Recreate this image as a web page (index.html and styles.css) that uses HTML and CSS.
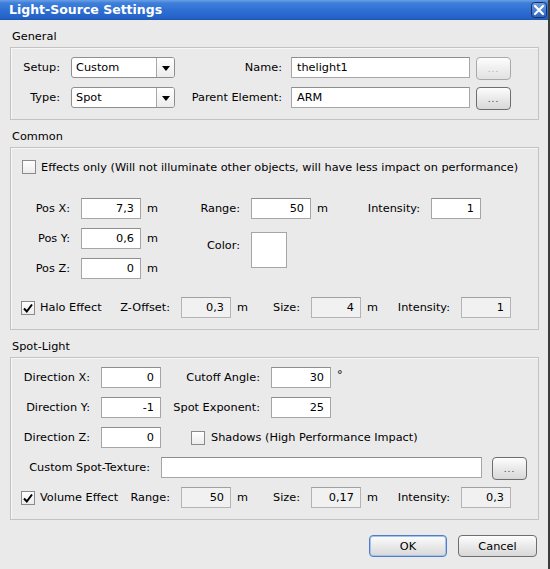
FILE: index.html
```html
<!DOCTYPE html>
<html lang="en">
<head>
    <meta charset="UTF-8">
    <title>Light-Source Settings</title>
    <link rel="stylesheet" href="styles.css">
</head>
<body>

    <div class="window">
        <div class="titlebar">
            <span class="title">Light-Source Settings</span>
            <span class="close">
                <svg width="16" height="16" viewBox="0 0 16 16">
                    <defs>
                        <linearGradient id="cg" x1="0" y1="0" x2="0" y2="1">
                            <stop offset="0" stop-color="#6d9fe4"/>
                            <stop offset="1" stop-color="#2b62c2"/>
                        </linearGradient>
                    </defs>
                    <rect x="0.5" y="0.5" width="15" height="15" rx="3" fill="url(#cg)" stroke="#1d2f5c"/>
                    <path d="M4 4 L12 12 M12 4 L4 12" stroke="#fff" stroke-width="2.2" stroke-linecap="round"/>
                </svg>
            </span>
        </div>

        <div class="content">
            <!-- General -->
            <div class="group-title">General</div>
            <div class="group general">
                <div class="general-grid">
                    <span class="lbl">Setup:</span>
                    <div class="combo"><span class="combo-text">Custom</span><span class="combo-btn"><i></i></span></div>
                    <span class="lbl lbl-name">Name:</span>
                    <div class="field">thelight1</div>
                    <button class="dots" disabled>...</button>

                    <span class="lbl">Type:</span>
                    <div class="combo"><span class="combo-text">Spot</span><span class="combo-btn"><i></i></span></div>
                    <span class="lbl lbl-name">Parent Element:</span>
                    <div class="field">ARM</div>
                    <button class="dots">...</button>
                </div>
            </div>

            <!-- Common -->
            <div class="group-title">Common</div>
            <div class="group common">
                <div class="check-row">
                    <span class="check"></span>
                    <span>Effects only (Will not illuminate other objects, will have less impact on performance)</span>
                </div>

                <div class="common-grid">
                    <span class="lbl c1">Pos X:</span>
                    <div class="field num">7,3</div>
                    <span class="unit">m</span>
                    <span class="lbl">Range:</span>
                    <div class="field num">50</div>
                    <span class="unit">m</span>
                    <span class="lbl">Intensity:</span>
                    <div class="field num">1</div>

                    <span class="lbl c1">Pos Y:</span>
                    <div class="field num">0,6</div>
                    <span class="unit">m</span>
                    <span class="lbl color-lbl">Color:</span>
                    <div class="color-box"></div>

                    <span class="lbl c1">Pos Z:</span>
                    <div class="field num">0</div>
                    <span class="unit">m</span>
                </div>

                <div class="effect-row">
                    <div class="check-row">
                        <span class="check checked">
                            <svg width="12" height="12" viewBox="0 0 12 12"><path d="M2 6.5 L4.8 9.5 L10 2.5" fill="none" stroke="#000" stroke-width="2"/></svg>
                        </span>
                        <span>Halo Effect</span>
                    </div>
                    <span class="lbl">Z-Offset:</span>
                    <div class="field num off">0,3</div>
                    <span class="unit">m</span>
                    <span class="lbl">Size:</span>
                    <div class="field num off">4</div>
                    <span class="unit">m</span>
                    <span class="lbl">Intensity:</span>
                    <div class="field num off">1</div>
                </div>
            </div>

            <!-- Spot-Light -->
            <div class="group-title">Spot-Light</div>
            <div class="group spot">
                <div class="spot-grid">
                    <span class="lbl">Direction X:</span>
                    <div class="field num">0</div>
                    <span class="lbl">Cutoff Angle:</span>
                    <div class="field num">30</div>
                    <span class="unit deg">°</span>

                    <span class="lbl">Direction Y:</span>
                    <div class="field num">-1</div>
                    <span class="lbl">Spot Exponent:</span>
                    <div class="field num">25</div>
                    <span></span>

                    <span class="lbl">Direction Z:</span>
                    <div class="field num">0</div>
                    <div class="check-row shadows">
                        <span class="check"></span>
                        <span>Shadows (High Performance Impact)</span>
                    </div>
                </div>

                <div class="texture-row">
                    <span class="lbl tex-lbl">Custom Spot-Texture:</span>
                    <div class="field tex-field"></div>
                    <button class="dots">...</button>
                </div>

                <div class="effect-row">
                    <div class="check-row">
                        <span class="check checked">
                            <svg width="12" height="12" viewBox="0 0 12 12"><path d="M2 6.5 L4.8 9.5 L10 2.5" fill="none" stroke="#000" stroke-width="2"/></svg>
                        </span>
                        <span>Volume Effect</span>
                    </div>
                    <span class="lbl">Range:</span>
                    <div class="field num off">50</div>
                    <span class="unit">m</span>
                    <span class="lbl">Size:</span>
                    <div class="field num off">0,17</div>
                    <span class="unit">m</span>
                    <span class="lbl">Intensity:</span>
                    <div class="field num off">0,3</div>
                </div>
            </div>

            <div class="buttons">
                <button class="btn default">OK</button>
                <button class="btn">Cancel</button>
            </div>
        </div>
    </div>

</body>
</html>
```

FILE: styles.css
```css
body {
    margin: 0;
    padding: 0;
    font-family: "DejaVu Sans", "Liberation Sans", sans-serif;
    font-size: 11.3px;
    color: #000;
    background-color: #eaeaea;
}
.window {
    width: 548px;
    height: 569px;
    background-color: #eaeaea;
    border-right: 2px solid #3c3c3c;
}
.titlebar {
    height: 20px;
    display: flex;
    align-items: center;
    justify-content: space-between;
    padding: 0 1px 0 9px;
    background: linear-gradient(#6a9fe6 0, #3f7fda 3px, #2f6fd3 10px, #2462c6 18px, #1b55b0 20px);
}
.title {
    color: #fff;
    font-weight: bold;
    font-size: 12.5px;
    line-height: 20px;
}
.close {
    display: flex;
    width: 16px;
    height: 16px;
}
.content {
    padding: 0 0 0 10px;
}
.group-title {
    line-height: 13px;
    margin: 10px 0 4px 2px;
}
.group {
    width: 527px;
    border: 1px solid #c3c3c3;
    box-shadow: inset 1px 1px 0 #f7f7f7;
}
.lbl {
    display: flex;
    align-items: center;
    justify-content: flex-end;
    padding-right: 11px;
    white-space: nowrap;
}
.unit {
    display: flex;
    align-items: center;
    padding-left: 6px;
}
.deg {
    align-items: flex-start;
    padding-top: 1px;
}
.field {
    box-sizing: border-box;
    height: 21px;
    line-height: 19px;
    padding: 0 5px;
    background-color: #fff;
    border: 1px solid #a6a6a6;
    border-top-color: #8e8e8e;
    white-space: nowrap;
}
.field.num {
    text-align: right;
    padding-right: 6px;
}
.field.off {
    background-color: #f1f1f1;
    border-color: #b4b4b4;
    border-top-color: #a0a0a0;
}

/* combo box */
.combo {
    box-sizing: border-box;
    height: 21px;
    display: flex;
    background-color: #fff;
    border: 1px solid #8f8f8f;
    border-radius: 3px;
}
.combo-text {
    flex: 1;
    line-height: 19px;
    padding-left: 4px;
}
.combo-btn {
    width: 17px;
    display: flex;
    align-items: center;
    justify-content: center;
    border-left: 1px solid #a8a8a8;
    background: linear-gradient(#ffffff, #ececec);
    border-radius: 0 2px 2px 0;
}
.combo-btn i {
    width: 0;
    height: 0;
    border-left: 4px solid transparent;
    border-right: 4px solid transparent;
    border-top: 5px solid #000;
    margin-top: 1px;
}

/* buttons */
.dots, .btn {
    box-sizing: border-box;
    font-family: inherit;
    font-size: 11.3px;
    color: #000;
    background: linear-gradient(#fdfdfd, #e6e6e6 60%, #d8d8d8);
    border: 1px solid #6e6e6e;
    border-radius: 4px;
    padding: 0;
}
.dots {
    width: 35px;
    height: 23px;
    margin-left: 6px;
    font-size: 9px;
    letter-spacing: 1px;
    color: #333;
}
.dots:disabled {
    color: #aaa;
    border-color: #a9a9a9;
    background: linear-gradient(#fdfdfd, #ececec 60%, #e2e2e2);
}

/* checkboxes */
.check-row {
    display: flex;
    align-items: center;
    height: 14px;
    white-space: nowrap;
}
.check {
    box-sizing: border-box;
    flex: none;
    width: 14px;
    height: 14px;
    margin-right: 5px;
    border: 1px solid #8a8a8a;
    background: linear-gradient(#ffffff, #ececec);
    display: flex;
    align-items: center;
    justify-content: center;
}

/* general */
.general-grid {
    display: grid;
    grid-template-columns: 60px 104px 116px 179px 41px;
    grid-template-rows: 21px 21px;
    row-gap: 9px;
    padding: 9px 0 11px;
}
.lbl-name {
    padding-right: 9px;
}

/* common */
.common {
    padding: 12px 0 11px;
}
.common > .check-row {
    padding-left: 11px;
}
.common-grid {
    display: grid;
    grid-template-columns: 70px 60px 19px 91px 60px 19px 101px 50px;
    grid-template-rows: 21px 21px 21px;
    row-gap: 9px;
    margin-top: 24px;
}
.c1 {
    grid-column: 1;
}
.color-lbl {
    grid-column: 4;
    grid-row: 2 / 4;
    align-items: flex-start;
    padding-top: 11px;
}
.color-box {
    grid-column: 5;
    grid-row: 2 / 4;
    width: 36px;
    height: 36px;
    margin-top: 4px;
    box-sizing: border-box;
    background-color: #fff;
    border: 1px solid #a6a6a6;
}
.effect-row {
    display: grid;
    grid-template-columns: 109px 61px 50px 30px 50px 50px 30px 70px 50px;
    height: 21px;
}
.common .effect-row {
    margin-top: 18px;
}
.effect-row .check-row {
    height: 21px;
    padding-left: 10px;
}

/* spot-light */
.spot {
    display: flex;
    flex-direction: column;
    gap: 9px;
    padding: 9px 0 11px;
}
.spot-grid {
    display: grid;
    grid-template-columns: 90px 60px 110px 60px 30px;
    grid-template-rows: 21px 21px 21px;
    row-gap: 9px;
}
.shadows {
    grid-column: 3 / 6;
    height: 21px;
    padding-left: 30px;
}
.shadows .check {
    margin-right: 6px;
}
.texture-row {
    display: flex;
    height: 21px;
}
.tex-lbl {
    width: 150px;
    box-sizing: border-box;
}
.tex-field {
    width: 321px;
}
.texture-row .dots {
    margin-left: 10px;
}

/* dialog buttons */
.buttons {
    display: flex;
    justify-content: flex-end;
    gap: 11px;
    margin-top: 15px;
    padding-right: 1px;
    width: 527px;
}
.btn {
    width: 79px;
    height: 22px;
}
.btn.default {
    width: 78px;
    border-color: #4d7ec6;
    box-shadow: inset 0 0 0 1px #a6c2ea;
}
```
